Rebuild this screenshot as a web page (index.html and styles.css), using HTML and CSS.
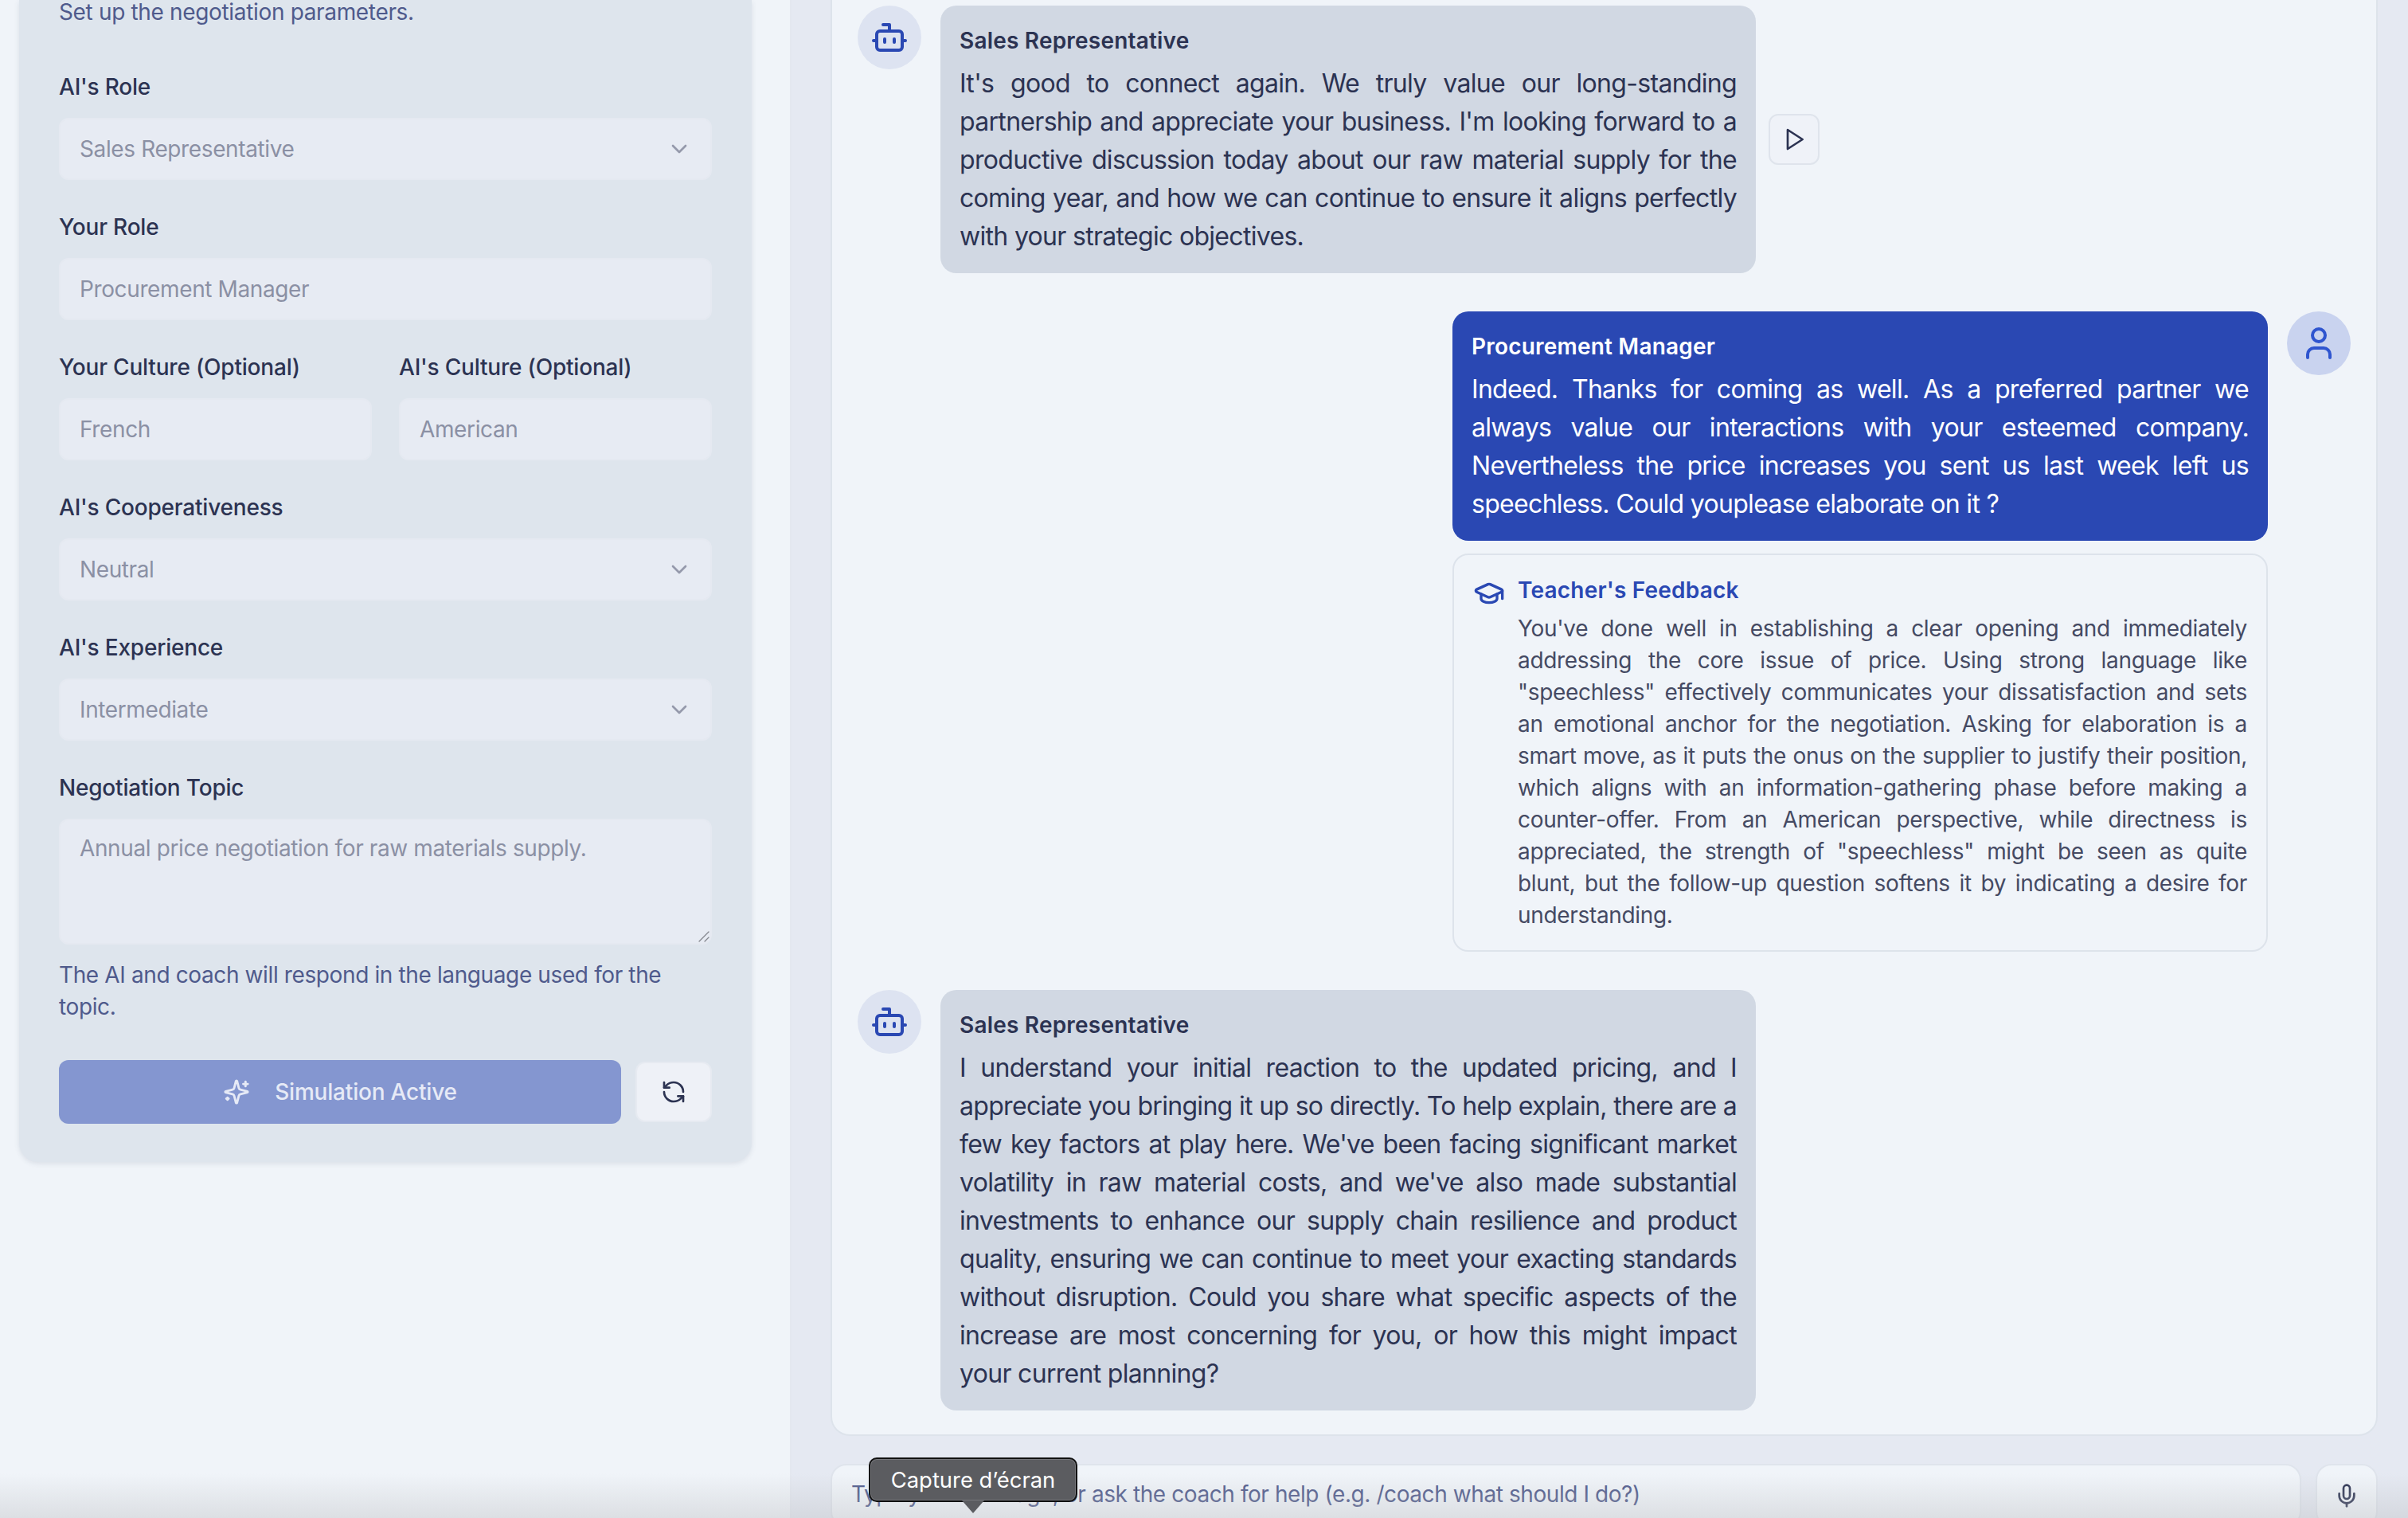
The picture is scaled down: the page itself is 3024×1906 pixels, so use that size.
FILE: index.html
```html
<!DOCTYPE html>
<html lang="en">
<head>
    <meta charset="UTF-8">
    <meta name="viewport" content="width=device-width, initial-scale=1.0">
    <title>Negotiation Simulator</title>
    <link rel="stylesheet" href="styles.css">
</head>
<body>
    <div class="app">
        <aside class="sidebar">
            <form class="config-card">
                <p class="config-subtitle">Set up the negotiation parameters.</p>

                <div class="form-group">
                    <label for="aiRole">AI's Role</label>
                    <div class="select-wrap">
                        <select id="aiRole" disabled>
                            <option>Sales Representative</option>
                        </select>
                        <svg class="chevron" viewBox="0 0 24 24"><path d="m6 9 6 6 6-6"/></svg>
                    </div>
                </div>

                <div class="form-group">
                    <label for="yourRole">Your Role</label>
                    <input type="text" id="yourRole" value="Procurement Manager" disabled>
                </div>

                <div class="form-row">
                    <div class="form-group">
                        <label for="yourCulture">Your Culture (Optional)</label>
                        <input type="text" id="yourCulture" value="French" disabled>
                    </div>
                    <div class="form-group">
                        <label for="aiCulture">AI's Culture (Optional)</label>
                        <input type="text" id="aiCulture" value="American" disabled>
                    </div>
                </div>

                <div class="form-group">
                    <label for="cooperativeness">AI's Cooperativeness</label>
                    <div class="select-wrap">
                        <select id="cooperativeness" disabled>
                            <option>Neutral</option>
                        </select>
                        <svg class="chevron" viewBox="0 0 24 24"><path d="m6 9 6 6 6-6"/></svg>
                    </div>
                </div>

                <div class="form-group">
                    <label for="experience">AI's Experience</label>
                    <div class="select-wrap">
                        <select id="experience" disabled>
                            <option>Intermediate</option>
                        </select>
                        <svg class="chevron" viewBox="0 0 24 24"><path d="m6 9 6 6 6-6"/></svg>
                    </div>
                </div>

                <div class="form-group topic-group">
                    <label for="topic">Negotiation Topic</label>
                    <div class="textarea-wrap">
                        <textarea id="topic" disabled>Annual price negotiation for raw materials supply.</textarea>
                        <svg class="grip" viewBox="0 0 14 14"><path d="M1 13 13 1"/><path d="M8 13l5-5"/></svg>
                    </div>
                    <p class="help-text">The AI and coach will respond in the language used for the topic.</p>
                </div>

                <div class="action-row">
                    <button type="button" class="start-button">
                        <svg class="icon-sparkles" viewBox="0 0 24 24">
                            <path d="M9.937 15.5A2 2 0 0 0 8.5 14.063l-6.135-1.582a.5.5 0 0 1 0-.962L8.5 9.936A2 2 0 0 0 9.937 8.5l1.582-6.135a.5.5 0 0 1 .963 0L14.063 8.5A2 2 0 0 0 15.5 9.937l6.135 1.581a.5.5 0 0 1 0 .964L15.5 14.063a2 2 0 0 0-1.437 1.437l-1.582 6.135a.5.5 0 0 1-.963 0z"/>
                            <path d="M20 3v4"/><path d="M22 5h-4"/><path d="M4 17v2"/><path d="M5 18H3"/>
                        </svg>
                        Simulation Active
                    </button>
                    <button type="button" class="reset-button" aria-label="Reset">
                        <svg class="icon-reset" viewBox="0 0 24 24">
                            <path d="M21 12a9 9 0 0 0-9-9 9.75 9.75 0 0 0-6.74 2.74L3 8"/>
                            <path d="M3 3v5h5"/>
                            <path d="M3 12a9 9 0 0 0 9 9 9.75 9.75 0 0 0 6.74-2.74L21 16"/>
                            <path d="M16 16h5v5"/>
                        </svg>
                    </button>
                </div>
            </form>
        </aside>

        <main class="main">
            <section class="chat-panel">
                <div class="message">
                    <div class="avatar avatar-bot">
                        <svg viewBox="0 0 24 24">
                            <path d="M12 8V4H8"/>
                            <rect width="16" height="12" x="4" y="8" rx="2"/>
                            <path d="M2 14h2"/><path d="M20 14h2"/><path d="M15 13v2"/><path d="M9 13v2"/>
                        </svg>
                    </div>
                    <div class="bubble bubble-bot">
                        <div class="bubble-name">Sales Representative</div>
                        <p>It's good to connect again. We truly value our long-standing partnership and appreciate your business. I'm looking forward to a productive discussion today about our raw material supply for the coming year, and how we can continue to ensure it aligns perfectly with your strategic objectives.</p>
                    </div>
                    <button type="button" class="play-button" aria-label="Play">
                        <svg viewBox="0 0 24 24"><polygon points="6 3 20 12 6 21 6 3"/></svg>
                    </button>
                </div>

                <div class="message message-user">
                    <div class="user-column">
                        <div class="bubble bubble-user">
                            <div class="bubble-name">Procurement Manager</div>
                            <p>Indeed. Thanks for coming as well. As a preferred partner we always value our interactions with your esteemed company. Nevertheless the price increases you sent us last week left us speechless. Could youplease elaborate on it ?</p>
                        </div>
                        <div class="feedback">
                            <svg class="icon-cap" viewBox="0 0 24 24">
                                <path d="M21.42 10.922a1 1 0 0 0-.019-1.838L12.83 5.18a2 2 0 0 0-1.66 0L2.6 9.08a1 1 0 0 0 0 1.832l8.57 3.908a2 2 0 0 0 1.66 0z"/>
                                <path d="M22 10v6"/>
                                <path d="M6 12.5V16a6 3 0 0 0 12 0v-3.5"/>
                            </svg>
                            <div class="feedback-body">
                                <div class="feedback-title">Teacher's Feedback</div>
                                <p>You've done well in establishing a clear opening and immediately addressing the core issue of price. Using strong language like "speechless" effectively communicates your dissatisfaction and sets an emotional anchor for the negotiation. Asking for elaboration is a smart move, as it puts the onus on the supplier to justify their position, which aligns with an information-gathering phase before making a counter-offer. From an American perspective, while directness is appreciated, the strength of "speechless" might be seen as quite blunt, but the follow-up question softens it by indicating a desire for understanding.</p>
                            </div>
                        </div>
                    </div>
                    <div class="avatar avatar-user">
                        <svg viewBox="0 0 24 24">
                            <path d="M19 21v-2a4 4 0 0 0-4-4H9a4 4 0 0 0-4 4v2"/>
                            <circle cx="12" cy="7" r="4"/>
                        </svg>
                    </div>
                </div>

                <div class="message">
                    <div class="avatar avatar-bot">
                        <svg viewBox="0 0 24 24">
                            <path d="M12 8V4H8"/>
                            <rect width="16" height="12" x="4" y="8" rx="2"/>
                            <path d="M2 14h2"/><path d="M20 14h2"/><path d="M15 13v2"/><path d="M9 13v2"/>
                        </svg>
                    </div>
                    <div class="bubble bubble-bot">
                        <div class="bubble-name">Sales Representative</div>
                        <p>I understand your initial reaction to the updated pricing, and I appreciate you bringing it up so directly. To help explain, there are a few key factors at play here. We've been facing significant market volatility in raw material costs, and we've also made substantial investments to enhance our supply chain resilience and product quality, ensuring we can continue to meet your exacting standards without disruption. Could you share what specific aspects of the increase are most concerning for you, or how this might impact your current planning?</p>
                    </div>
                </div>
            </section>

            <div class="input-row">
                <input type="text" class="chat-input" placeholder="Type your message, or ask the coach for help (e.g. /coach what should I do?)">
                <button type="button" class="mic-button" aria-label="Record">
                    <svg viewBox="0 0 24 24">
                        <path d="M12 2a3 3 0 0 0-3 3v7a3 3 0 0 0 6 0V5a3 3 0 0 0-3-3Z"/>
                        <path d="M19 10v2a7 7 0 0 1-14 0v-2"/>
                        <line x1="12" x2="12" y1="19" y2="22"/>
                    </svg>
                </button>
            </div>
        </main>
    </div>

    <!-- shadow of the OS dock and the screenshot tooltip, both over the page -->
    <div class="bottom-fade"></div>
    <div class="os-tooltip">Capture d’écran</div>
</body>
</html>
```

FILE: styles.css
```css
* {
    box-sizing: border-box;
}

html,
body {
    height: 100%;
}

body {
    margin: 0;
    overflow: hidden;
    font-family: Inter, "Liberation Sans", sans-serif;
    font-size: 28px;
    line-height: 40px;
    letter-spacing: -0.38px;
    color: #2c3352;
    background-color: #f0f4f9;
}

p {
    margin: 0;
}

svg {
    fill: none;
    stroke: currentColor;
    stroke-width: 2;
    stroke-linecap: round;
    stroke-linejoin: round;
    flex-shrink: 0;
}

.app {
    display: flex;
    height: 100%;
    overflow: hidden;
}

/* Left column */
.sidebar {
    width: 994px;
    flex-shrink: 0;
    padding: 0 48px 0 24px;
    background-color: #f0f4f9;
    border-right: 2px solid #e4e8f0;
}

.config-card {
    padding: 0 50px 48px;
    background-color: #dee5ed;
    border-radius: 0 0 24px 24px;
    box-shadow: 0 2px 6px rgba(60, 70, 100, 0.12);
}

.config-subtitle {
    margin-bottom: 59px;
    line-height: 30px;
    letter-spacing: -0.34px;
    color: #4f5a8c;
}

.form-group {
    margin-bottom: 39px;
}

.form-group label {
    display: block;
    margin-bottom: 19px;
    font-weight: 500;
    letter-spacing: -0.2px;
    color: #2c3352;
}

.form-row {
    display: grid;
    grid-template-columns: 1fr 1fr;
    gap: 34px;
}

input,
select,
textarea {
    font-family: inherit;
    letter-spacing: -0.38px;
}

.config-card input,
.config-card select,
.config-card textarea {
    display: block;
    width: 100%;
    height: 78px;
    padding: 0 24px 0;
    font-size: 28px;
    line-height: 40px;
    color: #8b90a4;
    -webkit-text-fill-color: #8b90a4;
    opacity: 1;
    background-color: #e7ebf3;
    border: 2px solid #e5e9f1;
    border-radius: 12px;
    outline: none;
    appearance: none;
}

.config-card textarea {
    height: 158px;
    padding: 15px 24px;
    resize: none;
}

.select-wrap,
.textarea-wrap {
    position: relative;
}

.chevron {
    position: absolute;
    top: 23px;
    right: 25px;
    width: 32px;
    height: 32px;
    color: #9599ab;
}

.grip {
    position: absolute;
    right: 3px;
    bottom: 3px;
    width: 14px;
    height: 14px;
    stroke-width: 1.2;
    color: #85888f;
}

.topic-group {
    margin-bottom: 47px;
}

.help-text {
    margin-top: 18px;
    color: #4f5a8c;
}

.action-row {
    display: flex;
    align-items: center;
    gap: 18px;
}

.start-button {
    display: flex;
    flex: 1;
    align-items: center;
    justify-content: center;
    gap: 31px;
    height: 80px;
    font-family: inherit;
    font-size: 28px;
    font-weight: 500;
    letter-spacing: -0.2px;
    color: #e6eaf6;
    background-color: #8496d0;
    border: none;
    border-radius: 12px;
}

.icon-sparkles {
    width: 34px;
    height: 34px;
}

.reset-button {
    display: flex;
    align-items: center;
    justify-content: center;
    width: 96px;
    height: 76px;
    color: #2c3352;
    background-color: #eef1f7;
    border: 2px solid #e6eaf1;
    border-radius: 12px;
}

.icon-reset {
    width: 32px;
    height: 32px;
}

/* Right column */
.main {
    display: flex;
    flex: 1;
    flex-direction: column;
    gap: 35px;
    min-width: 0;
    padding: 0 38px 0 49px;
    background-color: #e5e9f2;
}

.chat-panel {
    display: flex;
    flex-direction: column;
    gap: 48px;
    height: 1803px;
    flex-shrink: 0;
    padding: 7px 32px 32px;
    background-color: #f0f4f9;
    border: 2px solid #dde3eb;
    border-top: none;
    border-radius: 0 0 24px 24px;
}

.message {
    display: flex;
    align-items: flex-start;
    gap: 24px;
}

.message-user {
    justify-content: flex-end;
}

.avatar {
    display: flex;
    align-items: center;
    justify-content: center;
    width: 80px;
    height: 80px;
    flex-shrink: 0;
    border-radius: 50%;
}

.avatar svg {
    width: 48px;
    height: 48px;
}

.avatar-bot {
    color: #2a48b3;
    background-color: #dde3f1;
}

.avatar-user {
    color: #2f55cf;
    background-color: #c9d3ef;
}

.bubble {
    width: 1024px;
    padding: 24px 24px 22px;
    font-size: 32px;
    line-height: 48px;
    text-align: justify;
    border-radius: 20px;
}

.bubble p {
    letter-spacing: -0.69px;
}

.bubble-name {
    margin-bottom: 10px;
    font-size: 28px;
    font-weight: 600;
    line-height: 40px;
    letter-spacing: 0.2px;
    text-align: left;
}

.bubble-bot {
    color: #2c3352;
    background-color: #d1d8e3;
}

.bubble-user {
    color: #fff;
    background-color: #2a48b3;
}

.play-button {
    display: flex;
    align-items: center;
    justify-content: center;
    width: 64px;
    height: 64px;
    flex-shrink: 0;
    align-self: center;
    margin-left: -8px;
    color: #2c3352;
    background-color: #eff2f8;
    border: 2px solid #dfe4ec;
    border-radius: 12px;
}

.play-button svg {
    width: 32px;
    height: 32px;
}

.user-column {
    display: flex;
    flex-direction: column;
    gap: 16px;
    width: 1024px;
}

.feedback {
    display: flex;
    gap: 16px;
    padding: 24px;
    background-color: #f0f4f9;
    border: 2px solid #dde3eb;
    border-radius: 20px;
}

.icon-cap {
    width: 40px;
    height: 40px;
    margin-top: 4px;
    color: #2a48b3;
}

.feedback-body {
    flex: 1;
    min-width: 0;
}

.feedback-title {
    margin-bottom: 8px;
    font-weight: 600;
    letter-spacing: 0.2px;
    color: #2a48b3;
}

.feedback-body p {
    letter-spacing: -0.33px;
    color: #454a63;
    text-align: justify;
}

.input-row {
    display: flex;
    gap: 18px;
    height: 80px;
    flex-shrink: 0;
}

.chat-input {
    flex: 1;
    min-width: 0;
    height: 80px;
    padding: 0 24px 5px;
    font-size: 28px;
    letter-spacing: -0.42px;
    background-color: #f0f4f9;
    border: 2px solid #dfe4ec;
    border-radius: 20px;
    outline: none;
}

.chat-input::placeholder {
    color: #4f5a8c;
    opacity: 1;
}

.mic-button {
    display: flex;
    align-items: center;
    justify-content: center;
    width: 78px;
    height: 80px;
    flex-shrink: 0;
    color: #2c3352;
    background-color: #f0f4f9;
    border: 2px solid #dfe4ec;
    border-radius: 20px;
}

.mic-button svg {
    width: 32px;
    height: 32px;
}

/* Things that lie over the page */
.bottom-fade {
    position: absolute;
    left: 0;
    right: 0;
    bottom: 0;
    height: 56px;
    background: linear-gradient(to bottom, rgba(190, 192, 195, 0), rgba(190, 192, 195, 0.4));
    pointer-events: none;
}

.os-tooltip {
    position: absolute;
    left: 1091px;
    top: 1830px;
    width: 262px;
    height: 56px;
    font-size: 27.4px;
    line-height: 52px;
    letter-spacing: 0;
    text-align: center;
    color: #fff;
    background-color: #5b5c60;
    border: 2px solid #111;
    border-radius: 10px;
    box-shadow: inset 0 0 0 1px #77787c;
}

.os-tooltip::after {
    content: "";
    position: absolute;
    left: 50%;
    top: 52px;
    margin-left: -14px;
    border-style: solid;
    border-width: 16px 14px 0;
    border-color: #5b5c60 transparent transparent;
}
```
